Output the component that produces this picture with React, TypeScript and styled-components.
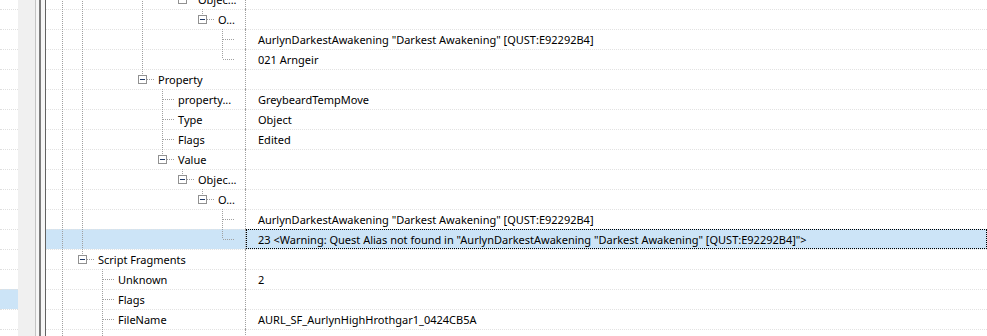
import React from 'react'
import styled, { createGlobalStyle } from 'styled-components'

const GlobalStyle = createGlobalStyle`
  html, body {
    margin: 0;
    padding: 0;
    background: #fff;
    overflow: hidden;
  }
  body {
    font-family: "Noto Sans", "Liberation Sans", sans-serif;
    font-size: 11px;
    color: #000;
  }
`

const ROW_H = 20
const INDENT = 20
const BASE = 16

const Window = styled.div`
  display: flex;
  width: 987px;
  height: 336px;
  overflow: hidden;
`

const LeftList = styled.div`
  width: 18px;
  overflow: hidden;
  display: flex;
  flex-direction: column;
  margin-top: -11px;
`

const LeftRow = styled.div<{ $selected?: boolean }>`
  flex: none;
  height: ${ROW_H}px;
  box-sizing: border-box;
  border-top: 1px dotted #e0e0e0;
  background: ${({ $selected }) => ($selected ? '#cce4f7' : 'transparent')};
`

const ScrollTrack = styled.div`
  width: 17px;
  background: #f0f0f0;
`

const Splitter = styled.div`
  width: 11px;
  background: linear-gradient(
    to right,
    #c4c4c4 0 1px,
    #f6f6f6 1px 4px,
    #7c7c7c 4px 6px,
    #f6f6f6 6px 10px,
    #626262 10px 11px
  );
`

const TreePanel = styled.div`
  flex: 1;
  overflow: hidden;
`

const TreeList = styled.div`
  display: flex;
  flex-direction: column;
  margin-top: -11px;
`

const TreeRow = styled.div<{ $selected?: boolean }>`
  display: flex;
  height: ${ROW_H}px;
  box-sizing: border-box;
  border-top: 1px dotted #e2e2e2;
  background: ${({ $selected }) => ($selected ? '#cce4f7' : 'transparent')};
`

const NameCell = styled.div`
  width: 199px;
  flex: none;
  display: flex;
  align-items: center;
  overflow: hidden;
  white-space: nowrap;
  border-right: 1px dotted #a0a0a0;
  margin-top: -1px;
  height: ${ROW_H}px;
`

const Label = styled.span`
  margin-left: 4px;
  padding-top: 2px;
  line-height: 18px;
`

const ValueCell = styled.div<{ $focused?: boolean }>`
  flex: 1;
  display: flex;
  align-items: center;
  padding: 2px 0 0 12px;
  line-height: 18px;
  white-space: nowrap;
  overflow: hidden;
  box-sizing: border-box;
  margin-top: -1px;
  height: ${ROW_H}px;
  outline: ${({ $focused }) => ($focused ? '1px dotted #000' : 'none')};
  outline-offset: -1px;
`

type Node = {
  depth: number
  name: string
  value?: string
  box?: boolean
  last?: boolean
  guides: number[]
  selected?: boolean
}

const QUEST = 'AurlynDarkestAwakening "Darkest Awakening" [QUST:E92292B4]'

const rows: Node[] = [
  { depth: 6, name: 'Objec...', box: true, last: true, guides: [0, 1, 4] },
  { depth: 7, name: 'O...', box: true, last: true, guides: [0, 1, 4] },
  { depth: 8, name: '', value: QUEST, guides: [0, 1, 4] },
  { depth: 8, name: '', value: '021 Arngeir', last: true, guides: [0, 1, 4] },
  { depth: 4, name: 'Property', box: true, last: true, guides: [0, 1] },
  { depth: 5, name: 'property...', value: 'GreybeardTempMove', guides: [0, 1] },
  { depth: 5, name: 'Type', value: 'Object', guides: [0, 1] },
  { depth: 5, name: 'Flags', value: 'Edited', guides: [0, 1] },
  { depth: 5, name: 'Value', box: true, last: true, guides: [0, 1] },
  { depth: 6, name: 'Objec...', box: true, last: true, guides: [0, 1] },
  { depth: 7, name: 'O...', box: true, last: true, guides: [0, 1] },
  { depth: 8, name: '', value: QUEST, guides: [0, 1] },
  {
    depth: 8,
    name: '',
    value: `23 <Warning: Quest Alias not found in "${QUEST}">`,
    last: true,
    guides: [0, 1],
    selected: true,
  },
  { depth: 1, name: 'Script Fragments', box: true, last: true, guides: [0] },
  { depth: 2, name: 'Unknown', value: '2', guides: [0] },
  { depth: 2, name: 'Flags', value: '', guides: [0] },
  { depth: 2, name: 'FileName', value: 'AURL_SF_AurlynHighHrothgar1_0424CB5A', guides: [0] },
  { depth: 2, name: 'Fragments', value: '', guides: [0] },
]

const LINE = '#a0a0a0'

const Connectors = ({ node }: { node: Node }) => {
  const cx = BASE + INDENT * node.depth
  const width = cx + 12
  const mid = 10
  return (
    <svg width={width} height={ROW_H} style={{ flex: 'none', display: 'block' }} shapeRendering="crispEdges">
      {node.guides.map((g) => {
        const x = BASE + INDENT * g + 0.5
        return <line key={g} x1={x} y1={0} x2={x} y2={ROW_H} stroke={LINE} strokeDasharray="1 1" />
      })}
      <line x1={cx + 0.5} y1={0} x2={cx + 0.5} y2={node.last ? mid : ROW_H} stroke={LINE} strokeDasharray="1 1" />
      <line
        x1={node.box ? cx + 5 : cx + 1}
        y1={mid + 0.5}
        x2={cx + 12}
        y2={mid + 0.5}
        stroke={LINE}
        strokeDasharray="1 1"
      />
      {node.box && (
        <g>
          <rect x={cx - 3.5} y={mid - 3.5} width={8} height={8} fill="#fff" stroke="#919191" />
          <line x1={cx - 2} y1={mid + 0.5} x2={cx + 3} y2={mid + 0.5} stroke="#1f3a68" />
        </g>
      )}
    </svg>
  )
}

export default function App() {
  return (
    <>
      <GlobalStyle />
      <Window>
        <LeftList>
          {rows.map((_, i) => (
            <LeftRow key={i} $selected={i === 15} />
          ))}
        </LeftList>
        <ScrollTrack />
        <Splitter />
        <TreePanel>
          <TreeList>
            {rows.map((node, i) => (
              <TreeRow key={i} $selected={node.selected}>
                <NameCell>
                  <Connectors node={node} />
                  <Label>{node.name}</Label>
                </NameCell>
                <ValueCell $focused={node.selected}>{node.value}</ValueCell>
              </TreeRow>
            ))}
          </TreeList>
        </TreePanel>
      </Window>
    </>
  )
}
